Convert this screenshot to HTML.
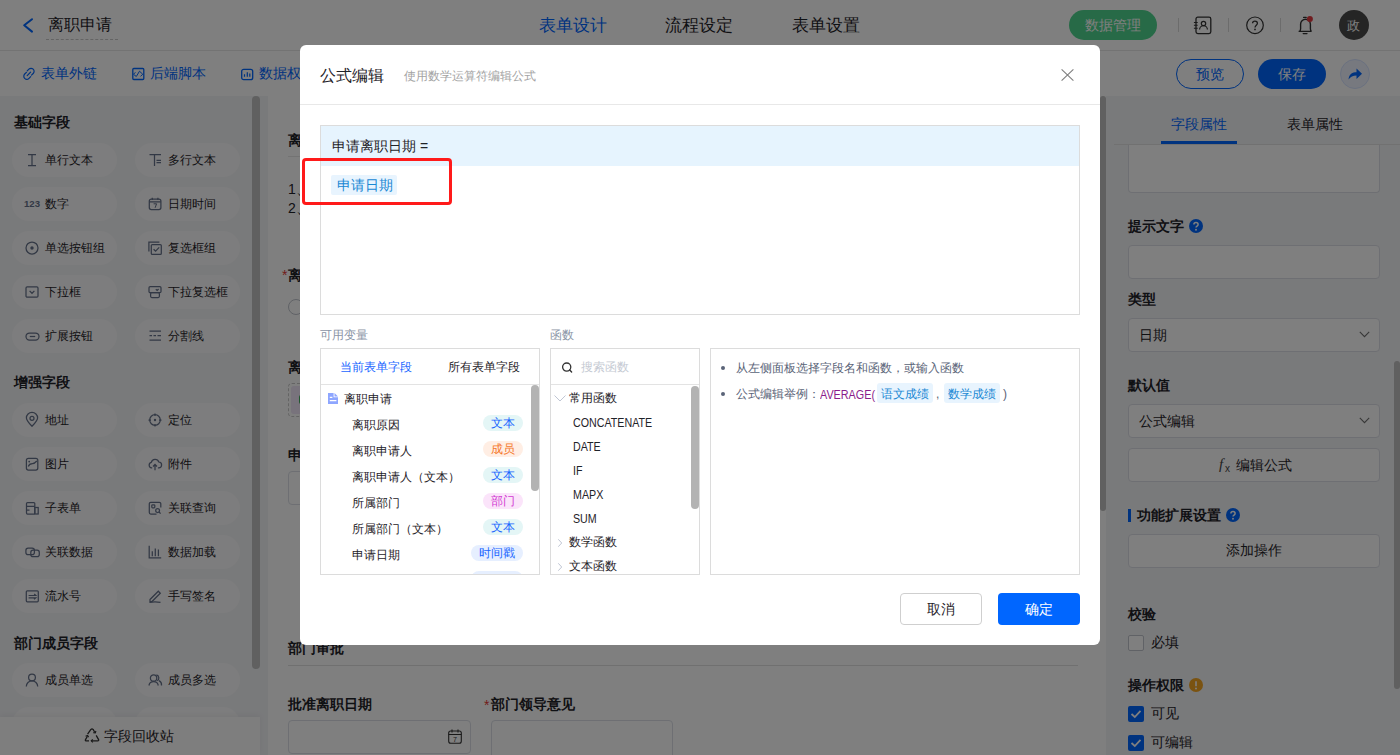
<!DOCTYPE html>
<html><head><meta charset="utf-8">
<style>
*{box-sizing:border-box;margin:0;padding:0}
html,body{width:1400px;height:755px;overflow:hidden;background:#fff;font-family:"Liberation Sans",sans-serif;color:#1f2329}
.a{position:absolute}
.t{position:absolute;white-space:nowrap;line-height:1}
svg{position:absolute;overflow:visible}
#mask{position:absolute;left:0;top:0;width:1400px;height:755px;background:rgba(0,0,0,.5)}
.pill{position:absolute;width:105px;height:34px;border-radius:17px;background:#fbfbfc}
.pill .t{font-size:12px;top:11px;left:33px;color:#1f2329}
.pill svg{left:16px;top:10px}
.sec{font-size:14px;font-weight:700;color:#1f2329}
.lbl{font-size:14px;font-weight:700;color:#1f2329}
.inp{position:absolute;background:#fff;border:1px solid #dcdfe6;border-radius:4px}
.ck{position:absolute;width:16px;height:16px;border-radius:2px}
.tag{position:absolute;height:16px;border-radius:8px;font-size:12px;line-height:16px;text-align:center;white-space:nowrap}
.row{font-size:12px;color:#1f2329}
.fn{font-size:12px;color:#1f2329}
.lat{transform:scaleX(.89);transform-origin:0 0;margin-top:1px}
</style></head><body>
<!-- ================= PAGE ================= -->
<div class="a" style="left:0;top:0;width:1400px;height:51px;border-bottom:1px solid #e6e6e6;background:#fff"></div>
<div class="a" style="left:0;top:51px;width:1400px;height:45px;background:#fff"></div>
<!-- header -->
<svg style="left:23px;top:18px" width="11" height="16" viewBox="0 0 11 16"><path d="M9 1.2 L1.2 7.3 L9 13.6" fill="none" stroke="#0066ff" stroke-width="2" stroke-linecap="round" stroke-linejoin="round"/></svg>
<div class="t" style="left:48px;top:17px;font-size:16px">离职申请</div>
<div class="a" style="left:46px;top:39px;width:72px;height:0;border-top:1px dashed #c8c8c8"></div>
<div class="t" style="left:539px;top:17px;font-size:17px;color:#0066ff">表单设计</div>
<div class="t" style="left:665px;top:17px;font-size:17px">流程设定</div>
<div class="t" style="left:792px;top:17px;font-size:17px">表单设置</div>
<div class="a" style="left:1069px;top:10px;width:88px;height:30px;border-radius:15px;background:#4ed48e"></div>
<div class="t" style="left:1085px;top:18px;font-size:14px;color:#fff">数据管理</div>
<div class="a" style="left:1178px;top:18px;width:1px;height:14px;background:#d9d9d9"></div>
<div class="a" style="left:1228px;top:18px;width:1px;height:14px;background:#d9d9d9"></div>
<div class="a" style="left:1280px;top:18px;width:1px;height:14px;background:#d9d9d9"></div>
<svg style="left:1193px;top:16px" width="19" height="19" viewBox="0 0 19 19"><rect x="3" y="1.2" width="14.8" height="16.4" rx="1.8" fill="none" stroke="#333" stroke-width="1.3"/><circle cx="10.5" cy="7.5" r="2.2" fill="none" stroke="#333" stroke-width="1.2"/><path d="M6.6 13.6 A3.9 3.9 0 0 1 14.4 13.6" fill="none" stroke="#333" stroke-width="1.2"/><path d="M0.9 6.5h3.8M0.9 9.3h3.8M0.9 12.3h3.8" stroke="#333" stroke-width="1.1"/></svg>
<svg style="left:1245px;top:16px" width="20" height="20" viewBox="0 0 20 20"><circle cx="10" cy="9.3" r="8.3" fill="none" stroke="#333" stroke-width="1.2"/><path d="M7.6 7.2 C7.6 4.4 12.4 4.4 12.4 7.2 C12.4 9.2 10 9.3 10 11.6" fill="none" stroke="#333" stroke-width="1.3"/><circle cx="10" cy="13.4" r="0.85" fill="#333"/></svg>
<svg style="left:1297px;top:16px" width="17" height="19" viewBox="0 0 17 19"><path d="M1.6 15.4 H14.6 M2.6 15.4 C3.4 14.6 3.6 13.8 3.6 12.8 V8.2 A4.9 4.9 0 0 1 13.4 8.2 V12.8 C13.4 13.8 13.6 14.6 14.4 15.4" fill="none" stroke="#333" stroke-width="1.4" stroke-linejoin="round"/><path d="M6.6 1.4h2.6M6.2 17.6h3.8" stroke="#333" stroke-width="1.3" stroke-linecap="round"/><circle cx="12.9" cy="2.9" r="3" fill="#e0383e"/></svg>
<div class="a" style="left:1339px;top:10px;width:30px;height:30px;border-radius:15px;background:#4a4a4a"></div>
<div class="t" style="left:1347px;top:19px;font-size:13px;color:#fff">政</div>
<!-- toolbar -->
<svg style="left:22px;top:67px" width="14" height="14" viewBox="0 0 14 14"><path d="M5.2 3.9 L6.9 2.2 A3 3 0 0 1 11.2 6.5 L9.5 8.2" fill="none" stroke="#0066ff" stroke-width="1.2" stroke-linecap="round"/><path d="M8.7 9.6 L7 11.3 A3 3 0 0 1 2.7 7 L4.4 5.3" fill="none" stroke="#0066ff" stroke-width="1.2" stroke-linecap="round"/><path d="M5.2 8.6 L8.6 5.2" stroke="#0066ff" stroke-width="1.2" stroke-linecap="round"/></svg>
<div class="t" style="left:41px;top:66px;font-size:14px;color:#0066ff">表单外链</div>
<svg style="left:132px;top:67px" width="13" height="14" viewBox="0 0 13 14"><rect x="0.8" y="1.5" width="11" height="11" rx="1" fill="none" stroke="#0066ff" stroke-width="1.3"/><path d="M3.4 5.3 L1.5 7.3 L4.3 9.5 L7.5 4.2 L10.8 7.3 L8.5 9.3" fill="none" stroke="#0066ff" stroke-width="1" stroke-linejoin="round"/></svg>
<div class="t" style="left:150px;top:66px;font-size:14px;color:#0066ff">后端脚本</div>
<svg style="left:241px;top:68px" width="13" height="13" viewBox="0 0 13 13"><rect x="0.7" y="1.3" width="11" height="10.4" rx="2" fill="none" stroke="#0066ff" stroke-width="1.3"/><path d="M3.5 6.2v2.6M6.3 4.3v4.5M8.8 5.5v3.3" stroke="#0066ff" stroke-width="1.2"/></svg>
<div class="t" style="left:259px;top:66px;font-size:14px;color:#0066ff">数据权限</div>
<div class="a" style="left:1176px;top:59px;width:68px;height:30px;border:1.5px solid #0066ff;border-radius:15px"></div>
<div class="t" style="left:1196px;top:67px;font-size:14px;color:#0066ff">预览</div>
<div class="a" style="left:1258px;top:59px;width:68px;height:30px;border-radius:15px;background:#0066ff"></div>
<div class="t" style="left:1278px;top:67px;font-size:14px;color:#fff">保存</div>
<div class="a" style="left:1340px;top:59px;width:30px;height:30px;border-radius:15px;background:#eef3ff;border:1px solid #d6e2ff"></div>
<svg style="left:1347px;top:67px" width="16" height="14" viewBox="0 0 16 14"><path d="M1.5 12.5 C2 7 5.5 5.2 9.5 5.2 V1.5 L15 6.8 L9.5 12 V8.4 C6 8.4 3.5 9.5 1.5 12.5 Z" fill="#0066ff"/></svg>

<!-- left panel -->
<div class="a" style="left:0;top:96px;width:268px;height:659px;background:#f3f4f7"></div>
<div class="t sec" style="left:14px;top:115px">基础字段</div>
<div class="t sec" style="left:14px;top:375px">增强字段</div>
<div class="t sec" style="left:14px;top:636px">部门成员字段</div>
<!--pills-->
<div class="pill" style="left:12px;top:143px">
<svg style="left:13px;top:10px" width="14" height="14" viewBox="0 0 14 14"><path d="M3 1.5h8M3 12.5h8M7 1.5v11" fill="none" stroke="#65718a" stroke-width="1.25"/></svg>
<div class="t">单行文本</div></div>
<div class="pill" style="left:135px;top:143px">
<svg style="left:13px;top:10px" width="14" height="14" viewBox="0 0 14 14"><path d="M1.5 1.5h11.5M6.5 1.5v11.5M8.5 7.3h4.5M8.5 9.6h4.5" fill="none" stroke="#65718a" stroke-width="1.25"/></svg>
<div class="t">多行文本</div></div>
<div class="pill" style="left:12px;top:187px">
<svg style="left:13px;top:10px" width="14" height="14" viewBox="0 0 14 14"><text x="7" y="10" font-size="9.6" font-weight="700" text-anchor="middle" fill="#65718a" font-family="Liberation Sans">123</text></svg>
<div class="t">数字</div></div>
<div class="pill" style="left:135px;top:187px">
<svg style="left:13px;top:10px" width="14" height="14" viewBox="0 0 14 14"><rect x="1.3" y="2" width="11.6" height="10.6" rx="2" fill="none" stroke="#65718a" stroke-width="1.25"/><path d="M1.3 4.8h11.6M4.3 0.8v2.2M9.9 0.8v2.2" fill="none" stroke="#65718a" stroke-width="1.25"/><path d="M5.6 6.8h3l-1.5 4" fill="none" stroke="#65718a" stroke-width="1"/></svg>
<div class="t">日期时间</div></div>
<div class="pill" style="left:12px;top:231px">
<svg style="left:13px;top:10px" width="14" height="14" viewBox="0 0 14 14"><circle cx="7" cy="7" r="6" fill="none" stroke="#65718a" stroke-width="1.25"/><circle cx="7" cy="7" r="1.7" fill="#65718a"/></svg>
<div class="t">单选按钮组</div></div>
<div class="pill" style="left:135px;top:231px">
<svg style="left:13px;top:10px" width="14" height="14" viewBox="0 0 14 14"><path d="M0.9 10.5V1.2h10.5" fill="none" stroke="#65718a" stroke-width="1.25"/><rect x="3.3" y="3.6" width="10" height="9.8" rx="1" fill="none" stroke="#65718a" stroke-width="1.25"/><path d="M5.6 8.2l2 2 3.6-3.8" fill="none" stroke="#65718a" stroke-width="1.25"/></svg>
<div class="t">复选框组</div></div>
<div class="pill" style="left:12px;top:275px">
<svg style="left:13px;top:10px" width="14" height="14" viewBox="0 0 14 14"><rect x="1" y="1.8" width="12" height="10.4" rx="1.2" fill="none" stroke="#65718a" stroke-width="1.25"/><path d="M4.6 5.9l2.4 2.4 2.4-2.4" fill="none" stroke="#65718a" stroke-width="1.25"/></svg>
<div class="t">下拉框</div></div>
<div class="pill" style="left:135px;top:275px">
<svg style="left:13px;top:10px" width="14" height="14" viewBox="0 0 14 14"><rect x="1" y="1.6" width="12" height="6" rx="1.2" fill="none" stroke="#65718a" stroke-width="1.25"/><rect x="2.6" y="7.6" width="8.8" height="4.9" rx="1.2" fill="none" stroke="#65718a" stroke-width="1.25"/><path d="M7.8 4.2l1.4 1.2 1.4-1.4" fill="none" stroke="#65718a" stroke-width="1.25"/></svg>
<div class="t">下拉复选框</div></div>
<div class="pill" style="left:12px;top:319px">
<svg style="left:13px;top:10px" width="14" height="14" viewBox="0 0 14 14"><rect x="1" y="4" width="13" height="7" rx="3.5" fill="none" stroke="#65718a" stroke-width="1.25"/><path d="M4.8 7.5h5.4" fill="none" stroke="#65718a" stroke-width="1.25"/></svg>
<div class="t">扩展按钮</div></div>
<div class="pill" style="left:135px;top:319px">
<svg style="left:13px;top:10px" width="14" height="14" viewBox="0 0 14 14"><path d="M1.5 2.2h11.5M1.5 11h11.5" fill="none" stroke="#65718a" stroke-width="1.25"/><path d="M1.5 6.6h2.5M5.5 6.6h2.5M9.5 6.6h3.5" fill="none" stroke="#65718a" stroke-width="1.25"/></svg>
<div class="t">分割线</div></div>
<div class="pill" style="left:12px;top:403px">
<svg style="left:13px;top:10px" width="14" height="14" viewBox="0 0 14 14"><path d="M7 13.2C3.2 9.3 1.4 7.3 1.4 4.9A5.6 5.6 0 0 1 12.6 4.9C12.6 7.3 10.8 9.3 7 13.2Z" fill="none" stroke="#65718a" stroke-width="1.25"/><circle cx="7" cy="5.3" r="2" fill="none" stroke="#65718a" stroke-width="1.25"/></svg>
<div class="t">地址</div></div>
<div class="pill" style="left:135px;top:403px">
<svg style="left:13px;top:10px" width="14" height="14" viewBox="0 0 14 14"><circle cx="7" cy="7" r="5.3" fill="none" stroke="#65718a" stroke-width="1.25"/><path d="M7 0.5v2.5M7 11v2.5M0.5 7h2.5M11 7h2.5" fill="none" stroke="#65718a" stroke-width="1.25"/><circle cx="7" cy="7" r="1.2" fill="#65718a"/></svg>
<div class="t">定位</div></div>
<div class="pill" style="left:12px;top:447px">
<svg style="left:13px;top:10px" width="14" height="14" viewBox="0 0 14 14"><rect x="1.4" y="1.4" width="11.4" height="11.6" rx="2" fill="none" stroke="#65718a" stroke-width="1.25"/><path d="M3.3 9.5C4 7 6 6.5 7.5 6.5S10.5 5.5 11.8 4" fill="none" stroke="#65718a" stroke-width="1.25"/><circle cx="4.2" cy="4.6" r="0.9" fill="#65718a"/></svg>
<div class="t">图片</div></div>
<div class="pill" style="left:135px;top:447px">
<svg style="left:13px;top:10px" width="14" height="14" viewBox="0 0 14 14"><path d="M4.2 10.8H3.6A2.8 2.8 0 0 1 3.3 5.3A3.9 3.9 0 0 1 10.8 5A2.9 2.9 0 0 1 10.6 10.8H9.9" fill="none" stroke="#65718a" stroke-width="1.25"/><path d="M7 13.2V7.6M5 9.5L7 7.5L9 9.5" fill="none" stroke="#65718a" stroke-width="1.25"/></svg>
<div class="t">附件</div></div>
<div class="pill" style="left:12px;top:491px">
<svg style="left:13px;top:10px" width="14" height="14" viewBox="0 0 14 14"><rect x="1.5" y="1.5" width="8.3" height="11.5" rx="1" fill="none" stroke="#65718a" stroke-width="1.25"/><path d="M1.5 5.4h8.3M1.5 9h3" fill="none" stroke="#65718a" stroke-width="1.25"/><rect x="9.8" y="6.5" width="3.4" height="6.5" fill="none" stroke="#65718a" stroke-width="1.25"/></svg>
<div class="t">子表单</div></div>
<div class="pill" style="left:135px;top:491px">
<svg style="left:13px;top:10px" width="14" height="14" viewBox="0 0 14 14"><path d="M8.5 13H2.8A1.5 1.5 0 0 1 1.3 11.5V2.8A1.5 1.5 0 0 1 2.8 1.3H11.3A1.5 1.5 0 0 1 12.8 2.8V6.5" fill="none" stroke="#65718a" stroke-width="1.25"/><rect x="3.8" y="3.8" width="3" height="3" rx="0.8" fill="none" stroke="#65718a" stroke-width="1.25"/><circle cx="9.6" cy="9.6" r="1.9" fill="none" stroke="#65718a" stroke-width="1.25"/><path d="M11 11l1.6 1.6" fill="none" stroke="#65718a" stroke-width="1.25"/></svg>
<div class="t">关联查询</div></div>
<div class="pill" style="left:12px;top:535px">
<svg style="left:13px;top:10px" width="14" height="14" viewBox="0 0 14 14"><rect x="0.9" y="3.2" width="8.5" height="6.5" rx="2.2" fill="none" stroke="#65718a" stroke-width="1.25"/><rect x="5.8" y="5.2" width="8.5" height="6.5" rx="2.2" fill="none" stroke="#65718a" stroke-width="1.25"/></svg>
<div class="t">关联数据</div></div>
<div class="pill" style="left:135px;top:535px">
<svg style="left:13px;top:10px" width="14" height="14" viewBox="0 0 14 14"><path d="M1.2 0.8V12.8H13.2" fill="none" stroke="#65718a" stroke-width="1.25"/><path d="M4.3 6.2v5M7.3 3.6v7.6M10.4 4.6v6.6" fill="none" stroke="#65718a" stroke-width="1.25"/></svg>
<div class="t">数据加载</div></div>
<div class="pill" style="left:12px;top:579px">
<svg style="left:13px;top:10px" width="14" height="14" viewBox="0 0 14 14"><rect x="1.3" y="1.8" width="12" height="11" rx="1" fill="none" stroke="#65718a" stroke-width="1.25"/><path d="M3.6 6.5h7.2L9.2 5M3.6 8.8h7.2L9 10.3" fill="none" stroke="#65718a" stroke-width="1.2"/></svg>
<div class="t">流水号</div></div>
<div class="pill" style="left:135px;top:579px">
<svg style="left:13px;top:10px" width="14" height="14" viewBox="0 0 14 14"><path d="M2 10.5L10.3 2.2l2 2L4 12.5H2z" fill="none" stroke="#65718a" stroke-width="1.25"/><path d="M1.5 13.5C5 12.5 8 12.5 12.5 13.3" fill="none" stroke="#65718a" stroke-width="1.25"/></svg>
<div class="t">手写签名</div></div>
<div class="pill" style="left:12px;top:663px">
<svg style="left:13px;top:10px" width="14" height="14" viewBox="0 0 14 14"><circle cx="7" cy="4.5" r="3.4" fill="none" stroke="#65718a" stroke-width="1.25"/><path d="M1.3 13.5A5.7 5.7 0 0 1 12.7 13.5" fill="none" stroke="#65718a" stroke-width="1.25"/></svg>
<div class="t">成员单选</div></div>
<div class="pill" style="left:135px;top:663px">
<svg style="left:13px;top:10px" width="14" height="14" viewBox="0 0 14 14"><circle cx="5.6" cy="5" r="3.2" fill="none" stroke="#65718a" stroke-width="1.25"/><path d="M0.9 12.5A4.8 4.8 0 0 1 10.3 12.5" fill="none" stroke="#65718a" stroke-width="1.25"/><path d="M8.4 1.9A3.2 3.2 0 0 1 9.2 7.8M11 7.6A4.8 4.8 0 0 1 13.5 12.5" fill="none" stroke="#65718a" stroke-width="1.25"/></svg>
<div class="t">成员多选</div></div>
<div class="pill" style="left:12px;top:707px">
<div class="t">部门单选</div></div>
<div class="pill" style="left:135px;top:707px">
<div class="t">部门多选</div></div>
<!--/pills-->
<div class="a" style="left:252px;top:96px;width:8px;height:573px;border-radius:4px;background:#c0c0c0"></div>
<div class="a" style="left:0;top:717px;width:260px;height:38px;background:#fdfdfd;box-shadow:0 -2px 6px rgba(0,0,0,.05)"></div>
<svg style="left:84px;top:728px" width="16" height="15" viewBox="0 0 16 15"><path d="M3.6 6.2 L6.9 1.4 Q8 0.4 9.1 1.4 L10.6 4" fill="none" stroke="#333" stroke-width="1.3" stroke-linejoin="round"/><path d="M9.3 4.6 L11.3 4.9 L11.9 3" fill="none" stroke="#333" stroke-width="1.2"/><path d="M12.2 7.4 L14.6 11.6 Q15 12.8 13.8 12.8 L7.5 12.8" fill="none" stroke="#333" stroke-width="1.3" stroke-linejoin="round"/><path d="M8.8 11.3 L7.3 12.8 L8.8 14.3" fill="none" stroke="#333" stroke-width="1.2"/><path d="M5 12.8 L2 12.8 Q1 12.6 1.5 11.6 L3.4 8.2" fill="none" stroke="#333" stroke-width="1.3" stroke-linejoin="round"/><path d="M1.6 8.2 L3.5 7.5 L4.6 9.2" fill="none" stroke="#333" stroke-width="1.2"/></svg>
<div class="t" style="left:104px;top:729px;font-size:14px">字段回收站</div>

<!-- canvas -->
<div class="a" style="left:268px;top:96px;width:838px;height:659px;background:#fff"></div>
<div class="t lbl" style="left:288px;top:133px">离职原因说明</div>
<div class="a" style="left:288px;top:156px;width:790px;height:1px;background:#e6e6e6"></div>
<div class="t" style="left:288px;top:182px;font-size:14px">1、离职</div>
<div class="t" style="left:288px;top:201px;font-size:14px">2、离职</div>
<div class="t" style="left:282px;top:268px;font-size:14px;color:#e53935">*</div>
<div class="t lbl" style="left:288px;top:268px">离职原因</div>
<div class="a" style="left:288px;top:299px;width:16px;height:16px;border-radius:8px;border:1px solid #c0c4cc;background:#fff"></div>
<div class="t lbl" style="left:288px;top:360px">离职申请人</div>
<div class="a" style="left:288px;top:383px;width:120px;height:34px;border:1px dashed #c8c8c8;border-radius:4px"></div>
<div class="a" style="left:291px;top:386px;width:80px;height:28px;border-radius:3px;background:#f0e6f8"></div><div class="a" style="left:299px;top:395px;width:4px;height:9px;border-radius:2px;background:#3fae5c"></div>
<div class="t lbl" style="left:288px;top:448px">申请日期</div>
<div class="a" style="left:288px;top:471px;width:183px;height:34px;border:1px solid #dcdfe6;border-radius:4px"></div>
<div class="t lbl" style="left:288px;top:641px">部门审批</div>
<div class="a" style="left:288px;top:665px;width:790px;height:1px;background:#e0e0e0"></div>
<div class="t lbl" style="left:288px;top:697px">批准离职日期</div>
<div class="inp" style="left:288px;top:720px;width:183px;height:34px"></div>
<svg style="left:448px;top:729px" width="14" height="15" viewBox="0 0 14 15"><rect x="0.7" y="2" width="12.6" height="12.3" rx="2" fill="none" stroke="#333" stroke-width="1.1"/><path d="M0.7 5.5h12.6M4 0.5v3M10 0.5v3" stroke="#333" stroke-width="1.1"/><text x="7" y="12.8" font-size="7" text-anchor="middle" fill="#333" font-family="Liberation Sans">7</text></svg>
<div class="t" style="left:484px;top:698px;font-size:14px;color:#e53935">*</div>
<div class="t lbl" style="left:491px;top:697px">部门领导意见</div>
<div class="inp" style="left:491px;top:720px;width:182px;height:40px"></div>
<div class="a" style="left:1100px;top:96px;width:6px;height:415px;border-radius:3px;background:#c0c0c0"></div>

<!-- right panel -->
<div class="a" style="left:1106px;top:96px;width:294px;height:659px;background:#f3f4f7"></div>
<div class="t" style="left:1171px;top:117px;font-size:14px;color:#0066ff">字段属性</div>
<div class="t" style="left:1287px;top:117px;font-size:14px">表单属性</div>
<div class="inp" style="left:1128px;top:145px;width:252px;height:48px;border-top:none;border-radius:0 0 4px 4px"></div>
<div class="a" style="left:1114px;top:144px;width:286px;height:1px;background:#e3e3e3"></div>
<div class="a" style="left:1161px;top:141px;width:76px;height:3px;background:#0066ff"></div>
<div class="t lbl" style="left:1128px;top:219px">提示文字</div>
<svg style="left:1189px;top:219px" width="14" height="14" viewBox="0 0 14 14"><circle cx="7" cy="7" r="7" fill="#0066ff"/><path d="M4.9 5.4 C4.9 2.9 9.1 2.9 9.1 5.4 C9.1 7 7 7.1 7 8.6" fill="none" stroke="#fff" stroke-width="1.5"/><circle cx="7" cy="10.8" r="0.95" fill="#fff"/></svg>
<div class="inp" style="left:1128px;top:245px;width:252px;height:34px"></div>
<div class="t lbl" style="left:1128px;top:292px">类型</div>
<div class="inp" style="left:1128px;top:318px;width:252px;height:34px"></div>
<div class="t" style="left:1139px;top:328px;font-size:14px">日期</div>
<svg style="left:1359px;top:331px" width="11" height="7" viewBox="0 0 11 7"><path d="M0.8 0.8 L5.5 5.6 L10.2 0.8" fill="none" stroke="#6f6f6f" stroke-width="1.1"/></svg>
<div class="t lbl" style="left:1128px;top:378px">默认值</div>
<div class="inp" style="left:1128px;top:404px;width:252px;height:34px"></div>
<div class="t" style="left:1139px;top:414px;font-size:14px">公式编辑</div>
<svg style="left:1359px;top:417px" width="11" height="7" viewBox="0 0 11 7"><path d="M0.8 0.8 L5.5 5.6 L10.2 0.8" fill="none" stroke="#6f6f6f" stroke-width="1.1"/></svg>
<div class="inp" style="left:1128px;top:448px;width:252px;height:34px"></div>
<div class="t" style="left:1219px;top:457px;font-size:15px;font-style:italic;font-family:'Liberation Serif',serif;color:#444">f</div><div class="t" style="left:1225px;top:464px;font-size:10px;color:#444">x</div>
<div class="t" style="left:1236px;top:458px;font-size:14px">编辑公式</div>
<div class="a" style="left:1128px;top:509px;width:3px;height:13px;background:#0066ff"></div>
<div class="t lbl" style="left:1137px;top:508px">功能扩展设置</div>
<svg style="left:1226px;top:508px" width="14" height="14" viewBox="0 0 14 14"><circle cx="7" cy="7" r="7" fill="#0066ff"/><path d="M4.9 5.4 C4.9 2.9 9.1 2.9 9.1 5.4 C9.1 7 7 7.1 7 8.6" fill="none" stroke="#fff" stroke-width="1.5"/><circle cx="7" cy="10.8" r="0.95" fill="#fff"/></svg>
<div class="inp" style="left:1128px;top:534px;width:252px;height:34px"></div>
<div class="t" style="left:1226px;top:543px;font-size:14px">添加操作</div>
<div class="t lbl" style="left:1128px;top:607px">校验</div>
<div class="ck" style="left:1128px;top:635px;border:1px solid #c0c4cc;background:#fff"></div>
<div class="t" style="left:1151px;top:635px;font-size:14px">必填</div>
<div class="t lbl" style="left:1128px;top:678px">操作权限</div>
<svg style="left:1189px;top:678px" width="14" height="14" viewBox="0 0 14 14"><circle cx="7" cy="7" r="7" fill="#f5a623"/><path d="M7 3.2v5" stroke="#fff" stroke-width="1.6"/><circle cx="7" cy="10.5" r="0.95" fill="#fff"/></svg>
<div class="ck" style="left:1128px;top:706px;background:#0066ff"></div>
<svg style="left:1128px;top:706px" width="16" height="16" viewBox="0 0 16 16"><path d="M3.5 8 L6.8 11 L12.5 4.8" fill="none" stroke="#fff" stroke-width="1.8"/></svg>
<div class="t" style="left:1151px;top:706px;font-size:14px">可见</div>
<div class="ck" style="left:1128px;top:735px;background:#0066ff"></div>
<svg style="left:1128px;top:735px" width="16" height="16" viewBox="0 0 16 16"><path d="M3.5 8 L6.8 11 L12.5 4.8" fill="none" stroke="#fff" stroke-width="1.8"/></svg>
<div class="t" style="left:1151px;top:735px;font-size:14px">可编辑</div>
<div class="a" style="left:1394px;top:361px;width:6px;height:328px;border-radius:3px;background:#c0c0c0"></div>

<div id="mask"></div>

<!-- ================= MODAL ================= -->
<div class="a" style="left:300px;top:45px;width:800px;height:600px;background:#fff;border-radius:6px"></div>
<div class="t" style="left:320px;top:68px;font-size:16px">公式编辑</div>
<div class="t" style="left:404px;top:70px;font-size:12px;color:#a3a3a3">使用数学运算符编辑公式</div>
<svg style="left:1061px;top:69px" width="13" height="12" viewBox="0 0 13 12"><path d="M0.6 0.3 L12.4 11.7 M12.4 0.3 L0.6 11.7" stroke="#7f7f7f" stroke-width="1.1"/></svg>
<div class="a" style="left:300px;top:104px;width:800px;height:1px;background:#e8e8e8"></div>

<div class="a" style="left:320px;top:125px;width:760px;height:190px;border:1px solid #dcdcdc"></div>
<div class="a" style="left:321px;top:126px;width:758px;height:40px;background:#e6f4fe"></div>
<div class="t" style="left:332px;top:139px;font-size:14px;color:#1f2329">申请离职日期 =</div>
<div class="a" style="left:331px;top:175px;width:66px;height:20px;background:#e8f4fe;border-radius:2px"></div>
<div class="t" style="left:337px;top:178px;font-size:14px;color:#1a88d4">申请日期</div>
<div class="a" style="left:302px;top:158px;width:150px;height:47px;border:3px solid #ff1a1a;border-radius:4px"></div>

<div class="t" style="left:320px;top:329px;font-size:12px;color:#8a94a6">可用变量</div>
<div class="t" style="left:550px;top:329px;font-size:12px;color:#8a94a6">函数</div>

<!-- variables -->
<div class="a" style="left:320px;top:348px;width:220px;height:227px;border:1px solid #dcdcdc"></div>
<div class="a" style="left:321px;top:384px;width:218px;height:1px;background:#e3e3e3"></div>
<div class="t" style="left:340px;top:361px;font-size:12px;color:#1a66ff">当前表单字段</div>
<div class="t" style="left:448px;top:361px;font-size:12px">所有表单字段</div>
<div class="a" style="left:321px;top:385px;width:218px;height:189px;overflow:hidden">
  <svg style="left:7px;top:8px" width="10" height="11" viewBox="0 0 10 11"><path d="M0 0 H5.6 V4.2 H10 V11 H0 Z" fill="#8ea6ff"/><path d="M6.5 0 L10 3.4 H6.5 Z" fill="#8ea6ff"/><path d="M1.8 4.4 H4.4 M1.8 7.6 H8.4" stroke="#fff" stroke-width="1.1"/></svg>
  <div class="t row" style="left:23px;top:8px">离职申请</div>
  <div class="t row" style="left:31px;top:34px">离职原因</div>
  <div class="tag" style="left:162px;top:30px;width:40px;background:#e4f6f6;color:#1a66ff">文本</div>
  <div class="t row" style="left:31px;top:60px">离职申请人</div>
  <div class="tag" style="left:162px;top:56px;width:40px;background:#ffeee4;color:#f5782a">成员</div>
  <div class="t row" style="left:31px;top:86px">离职申请人（文本）</div>
  <div class="tag" style="left:162px;top:82px;width:40px;background:#e4f6f6;color:#1a66ff">文本</div>
  <div class="t row" style="left:31px;top:112px">所属部门</div>
  <div class="tag" style="left:162px;top:108px;width:40px;background:#fbe4fa;color:#d23ad2">部门</div>
  <div class="t row" style="left:31px;top:138px">所属部门（文本）</div>
  <div class="tag" style="left:162px;top:134px;width:40px;background:#e4f6f6;color:#1a66ff">文本</div>
  <div class="t row" style="left:31px;top:164px">申请日期</div>
  <div class="tag" style="left:150px;top:160px;width:52px;background:#e6efff;color:#1a66ff">时间戳</div>
  <div class="tag" style="left:150px;top:186px;width:52px;background:#e6efff;color:#1a66ff"></div>
</div>
<div class="a" style="left:531px;top:385px;width:8px;height:106px;border-radius:4px;background:#b3b3b3"></div>

<!-- functions -->
<div class="a" style="left:550px;top:348px;width:150px;height:227px;border:1px solid #dcdcdc"></div>
<div class="a" style="left:551px;top:384px;width:148px;height:1px;background:#e3e3e3"></div>
<svg style="left:562px;top:362px" width="12" height="12" viewBox="0 0 12 12"><circle cx="4.7" cy="5.1" r="4.1" fill="none" stroke="#333" stroke-width="1.3"/><path d="M7.7 8.1 L9.6 10" stroke="#333" stroke-width="1.4" stroke-linecap="round"/></svg>
<div class="t" style="left:581px;top:361px;font-size:12px;color:#c5cad3">搜索函数</div>
<div class="a" style="left:551px;top:385px;width:148px;height:189px;overflow:hidden">
  <svg style="left:3px;top:10px" width="12" height="7" viewBox="0 0 12 7"><path d="M0.5 0.5 L6 6 L11.5 0.5" fill="none" stroke="#c0c6d4" stroke-width="1"/></svg>
  <div class="t fn" style="left:18px;top:7px">常用函数</div>
  <div class="t fn lat" style="left:22px;top:31px">CONCATENATE</div>
  <div class="t fn lat" style="left:22px;top:55px">DATE</div>
  <div class="t fn lat" style="left:22px;top:79px">IF</div>
  <div class="t fn lat" style="left:22px;top:103px">MAPX</div>
  <div class="t fn lat" style="left:22px;top:127px">SUM</div>
  <svg style="left:7px;top:154px" width="4" height="8" viewBox="0 0 4 8"><path d="M0.3 0.3 L3.7 4 L0.3 7.7" fill="none" stroke="#c0c6d4" stroke-width="1"/></svg>
  <div class="t fn" style="left:18px;top:151px">数学函数</div>
  <svg style="left:7px;top:178px" width="4" height="8" viewBox="0 0 4 8"><path d="M0.3 0.3 L3.7 4 L0.3 7.7" fill="none" stroke="#c0c6d4" stroke-width="1"/></svg>
  <div class="t fn" style="left:18px;top:175px">文本函数</div>
</div>
<div class="a" style="left:691px;top:386px;width:8px;height:123px;border-radius:4px;background:#b3b3b3"></div>

<!-- description -->
<div class="a" style="left:710px;top:348px;width:370px;height:227px;border:1px solid #dcdcdc"></div>
<div class="a" style="left:721px;top:366px;width:4px;height:4px;border-radius:2px;background:#5a6478"></div>
<div class="t" style="left:736px;top:362px;font-size:12px;color:#5a6478">从左侧面板选择字段名和函数，或输入函数</div>
<div class="a" style="left:721px;top:392px;width:4px;height:4px;border-radius:2px;background:#5a6478"></div>
<div class="t" style="left:736px;top:388px;font-size:12px;color:#5a6478">公式编辑举例：</div><div class="t" style="left:820px;top:389px;font-size:12px;color:#8b1c8b;transform:scaleX(.9);transform-origin:0 0">AVERAGE(</div>
<div class="a" style="left:877px;top:383px;width:56px;height:20px;border-radius:3px;background:#e8f4fe"></div>
<div class="t" style="left:881px;top:388px;font-size:12px;color:#1a88d4">语文成绩</div>
<div class="t" style="left:936px;top:388px;font-size:12px;color:#5a6478">,</div>
<div class="a" style="left:944px;top:383px;width:56px;height:20px;border-radius:3px;background:#e8f4fe"></div>
<div class="t" style="left:948px;top:388px;font-size:12px;color:#1a88d4">数学成绩</div>
<div class="t" style="left:1003px;top:388px;font-size:12px;color:#5a6478">)</div>

<!-- footer -->
<div class="a" style="left:900px;top:593px;width:82px;height:32px;border:1px solid #cfcfcf;border-radius:4px;background:#fff"></div>
<div class="t" style="left:927px;top:602px;font-size:14px">取消</div>
<div class="a" style="left:998px;top:593px;width:82px;height:32px;border-radius:4px;background:#0066ff"></div>
<div class="t" style="left:1025px;top:602px;font-size:14px;color:#fff;font-weight:500">确定</div>
</body></html>
